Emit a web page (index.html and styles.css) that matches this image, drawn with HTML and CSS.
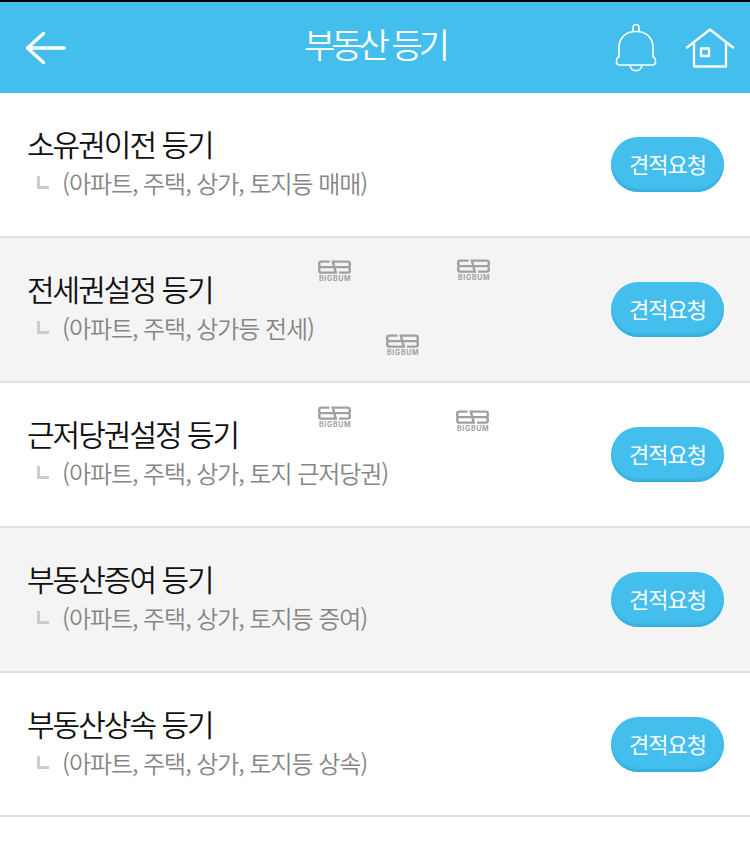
FILE: index.html
```html
<!DOCTYPE html>
<html lang="ko">
<head>
    <meta charset="UTF-8">
    <meta name="viewport" content="width=device-width, initial-scale=1.0">
    <title>부동산 등기</title>
    <link rel="stylesheet" href="styles.css">
</head>
<body>
    <svg class="symbols" aria-hidden="true">
        <symbol id="bigbum" viewBox="0 0 33 14">
            <path d="M11.5 1.6H3.2Q1.2 1.6 1.2 3.6V5.2Q1.2 7.1 3.2 7.1H29.8Q31.8 7.1 31.8 5.2V3.6Q31.8 1.6 29.8 1.6H14.8L17.8 12.6H3.2Q1.2 12.6 1.2 10.6V9Q1.2 7.1 3.2 7.1M29.8 7.1Q31.8 7.1 31.8 9V10.6Q31.8 12.6 29.8 12.6H21"/>
        </symbol>
    </svg>

    <header class="header">
        <a class="back-btn" href="#" aria-label="뒤로">
            <svg width="42" height="34" viewBox="0 0 42 34">
                <path d="M18.5 2.5L2.5 17L18.5 31.5M2.5 17H39.5"/>
            </svg>
        </a>
        <h1>부동산 등기</h1>
        <div class="header-icons">
            <svg class="bell" width="42" height="50" viewBox="0 0 42 50">
                <path d="M18 8.5V4.5a3 3 0 0 1 6 0V8.5M4 34V24.5C4 14.5 11 8.5 21 8.5S38 14.5 38 24.5V34M4 34Q1.5 34.5 1.5 37.5V39Q1.5 42 4.5 42H37.5Q40.5 42 40.5 39V37.5Q40.5 34.5 38 34M15 42C16 49.5 26 49.5 27 42"/>
            </svg>
            <svg class="home" width="50" height="42" viewBox="0 0 50 42">
                <path d="M2 20.5L25 2.5L48 20.5M9 16V39.5H41V16"/>
                <path d="M16 21.5h8v7.5h-8z"/>
            </svg>
        </div>
    </header>

    <main class="list">
        <div class="list-item">
            <div class="item-text">
                <h2>소유권이전 등기</h2>
                <p>(아파트, 주택, 상가, 토지등 매매)</p>
            </div>
            <button class="request-btn">견적요청</button>
        </div>
        <div class="list-item">
            <div class="item-text">
                <h2>전세권설정 등기</h2>
                <p>(아파트, 주택, 상가등 전세)</p>
            </div>
            <button class="request-btn">견적요청</button>
        </div>
        <div class="list-item">
            <div class="item-text">
                <h2>근저당권설정 등기</h2>
                <p>(아파트, 주택, 상가, 토지 근저당권)</p>
            </div>
            <button class="request-btn">견적요청</button>
        </div>
        <div class="list-item">
            <div class="item-text">
                <h2>부동산증여 등기</h2>
                <p>(아파트, 주택, 상가, 토지등 증여)</p>
            </div>
            <button class="request-btn">견적요청</button>
        </div>
        <div class="list-item">
            <div class="item-text">
                <h2>부동산상속 등기</h2>
                <p>(아파트, 주택, 상가, 토지등 상속)</p>
            </div>
            <button class="request-btn">견적요청</button>
        </div>
    </main>

    <div class="watermark mark-1"><svg><use href="#bigbum"/></svg><span>BIGBUM</span></div>
    <div class="watermark mark-2"><svg><use href="#bigbum"/></svg><span>BIGBUM</span></div>
    <div class="watermark mark-3"><svg><use href="#bigbum"/></svg><span>BIGBUM</span></div>
    <div class="watermark mark-4"><svg><use href="#bigbum"/></svg><span>BIGBUM</span></div>
    <div class="watermark mark-5"><svg><use href="#bigbum"/></svg><span>BIGBUM</span></div>
</body>
</html>
```
FILE: styles.css
```css
* {
    margin: 0;
    padding: 0;
    box-sizing: border-box;
}

body {
    position: relative;
    background: #fff;
    border-top: 2px solid #000;
    font-family: 'Noto Sans CJK KR', sans-serif;
    min-height: 862px;
}

.symbols {
    display: none;
}

/* header */
.header {
    display: grid;
    grid-template-columns: 1fr auto 1fr;
    align-items: center;
    height: 91px;
    padding: 0 15px 0 25px;
    background: #43beed;
}

.header svg {
    display: block;
    fill: none;
    stroke: #fff;
    stroke-linecap: round;
    stroke-linejoin: round;
}

.back-btn svg {
    stroke-width: 3.4;
}

.header h1 {
    color: #fff;
    font-size: 34px;
    font-weight: 350;
    line-height: 50px;
    letter-spacing: -4px;
    padding: 0 10px 7px 0;
}

.header-icons {
    display: flex;
    justify-content: flex-end;
    align-items: center;
    gap: 28px;
}

.bell {
    stroke-width: 1.6;
}

.home {
    stroke-width: 2.3;
}

/* list */
.list-item {
    display: flex;
    justify-content: space-between;
    align-items: center;
    height: 144.9px;
    padding: 0 26px 0 27px;
    border-bottom: 2px solid #e0e0e0;
}

.list-item:nth-child(even) {
    background: #f4f4f4;
}

.item-text {
    padding-bottom: 3px;
}

.item-text h2 {
    color: #111;
    font-size: 30px;
    font-weight: 350;
    line-height: 40px;
    letter-spacing: -2px;
}

.item-text p {
    display: flex;
    align-items: center;
    color: #868686;
    font-size: 24px;
    font-weight: 350;
    line-height: 39px;
    letter-spacing: -1.05px;
    white-space: pre;
}

.item-text p::before {
    content: "";
    width: 9px;
    height: 10px;
    margin: 0 13px 0 10px;
    border: solid #ccc;
    border-width: 0 0 3px 3px;
}

.request-btn {
    width: 113px;
    height: 55px;
    padding-bottom: 3px;
    border: none;
    border-radius: 28px;
    background: #43beed;
    box-shadow: inset 0 -3px 2px #37b0dd;
    color: #fff;
    font-family: inherit;
    font-size: 22px;
    line-height: 32px;
    letter-spacing: -1px;
    cursor: pointer;
}

/* watermarks scattered over the list */
.watermark {
    position: absolute;
    width: 33px;
    color: #a0a0a0;
}

.watermark svg {
    display: block;
    width: 33px;
    height: 14px;
    fill: none;
    stroke: #a0a0a0;
    stroke-width: 2.4;
}

.watermark span {
    display: block;
    margin-top: 1px;
    padding-left: 1px;
    font: bold 7px/8px 'Inter', sans-serif;
    letter-spacing: 0.7px;
    white-space: nowrap;
}

.mark-1 { left: 318px; top: 258px; }
.mark-2 { left: 457px; top: 257px; }
.mark-3 { left: 386px; top: 332px; }
.mark-4 { left: 318px; top: 404px; }
.mark-5 { left: 456px; top: 408px; }
```
